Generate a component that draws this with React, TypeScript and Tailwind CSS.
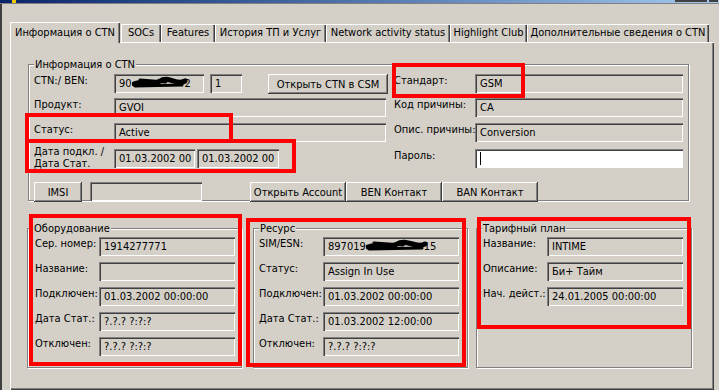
import React from "react";

const sunken =
  "shadow-[inset_1px_1px_0_#808080,inset_2px_2px_0_#404040,inset_-1px_-1px_0_#ffffff]";
const raised =
  "shadow-[inset_-1px_-1px_0_#404040,inset_1px_1px_0_#ffffff,inset_-2px_-2px_0_#808080]";

function Field({ w, white, children }: { w: string; white?: boolean; children?: React.ReactNode }) {
  return (
    <div
      className={`${w} h-[19px] shrink-0 ${white ? "bg-white" : "bg-[#d4d0c8]"} ${sunken} pl-[5px] pt-[3px] leading-[13px] whitespace-nowrap overflow-hidden flex items-start`}
    >
      {children}
    </div>
  );
}

function Button({ w, children }: { w: string; children: React.ReactNode }) {
  return (
    <div className={`${w} h-[20px] shrink-0 flex items-center justify-center leading-[13px] ${raised}`}>
      {children}
    </div>
  );
}

function Label({ w, children }: { w: string; children: React.ReactNode }) {
  return <div className={`${w} shrink-0 leading-[13px] whitespace-nowrap`}>{children}</div>;
}

function Group({ title, className, children }: { title: string; className: string; children?: React.ReactNode }) {
  return (
    <div className={`relative shrink-0 border border-[#808080] shadow-[1px_1px_0_#ffffff,inset_1px_1px_0_#ffffff] ${className}`}>
      <span className="absolute left-[5px] -top-[7px] bg-[#d4d0c8] px-px leading-[13px] whitespace-nowrap">{title}</span>
      {children}
    </div>
  );
}

function Scribble({ w }: { w: number }) {
  return (
    <svg width={w} height="13" viewBox={`0 0 ${w} 13`} className="shrink-0 -mt-px">
      <path
        d={`M2 8 C ${w * 0.2} 3, ${w * 0.35} 11, ${w * 0.5} 5 S ${w * 0.8} 10, ${w - 3} 5`}
        stroke="#000"
        strokeWidth="5"
        fill="none"
        strokeLinecap="round"
      />
      <path d={`M3 10 L ${w - 6} 9`} stroke="#000" strokeWidth="3" strokeLinecap="round" />
      <path d={`M8 4 L ${w * 0.6} 6`} stroke="#000" strokeWidth="3" strokeLinecap="round" />
    </svg>
  );
}

const tabs: { label: string; w: string }[] = [
  { label: "SOCs", w: "w-[40px]" },
  { label: "Features", w: "w-[54px]" },
  { label: "История ТП и Услуг", w: "w-[111px]" },
  { label: "Network activity status", w: "w-[124px]" },
  { label: "Highlight Club", w: "w-[77px]" },
  { label: "Дополнительные сведения о CTN", w: "w-[182px]" },
];

function Row({ label, children }: { label: string; children?: React.ReactNode }) {
  return (
    <div className="flex h-[19px]">
      <Label w="w-[64px]">{label}</Label>
      <Field w="w-[136px]">{children}</Field>
    </div>
  );
}

export default function App() {
  return (
    <div className="relative w-[719px] h-[390px] overflow-hidden bg-[#d4d0c8] text-[11px] text-black font-['DejaVu_Sans_Condensed','Liberation_Sans',sans-serif]">
      {/* title bar remains */}
      <div className="flex h-[3px] bg-linear-to-r from-[#0a246a] to-[#a6caf0]">
        <div className="ml-[12px] w-[4px] bg-[#f0c800]" />
        <div className="ml-auto w-[32px] h-[2px] bg-[#404040]" />
        <div className="ml-[2px] mr-[1px] w-[9px] h-[2px] bg-[#404040]" />
      </div>
      <div className="h-px bg-[#808080]" />

      <div className="flex">
        <div className="w-[2px] h-[386px] bg-[#404040]" />
        <div className="ml-[8px] flex flex-col">
          {/* tabs */}
          <div className="mt-[18px] flex items-end h-[20px]">
            <div className={`relative z-10 w-[110px] h-[21px] -mb-px pt-[4px] text-center leading-[13px] bg-[#d4d0c8] shadow-[inset_1px_1px_0_#ffffff,inset_-1px_0_0_#404040,inset_-2px_0_0_#808080]`}>
              Информация о CTN
            </div>
            <div className="w-px" />
            {tabs.map((t) => (
              <div
                key={t.label}
                className={`${t.w} h-[18px] pt-[2px] text-center leading-[13px] whitespace-nowrap shadow-[inset_1px_1px_0_#ffffff,inset_-1px_0_0_#404040,inset_-2px_0_0_#808080]`}
              >
                {t.label}
              </div>
            ))}
          </div>

          {/* panel */}
          <div className="w-[704px] h-[348px] pl-[18px] pt-[22px] shadow-[inset_1px_1px_0_#ffffff,inset_-1px_-1px_0_#404040,inset_-2px_-2px_0_#808080]">
            <Group title="Информация о CTN" className="w-[661px] h-[137px] pl-[5px] pt-[9px]">
              {/* row 1 */}
              <div className="flex">
                <div className="w-[360px] flex">
                  <Label w="w-[80px]">CTN:/ BEN:</Label>
                  <Field w="w-[90px]">
                    90
                    <Scribble w={56} />
                    <span className="-ml-[3px]">2</span>
                  </Field>
                  <div className="ml-[6px]">
                    <Field w="w-[32px]">1</Field>
                  </div>
                  <div className="ml-[26px]">
                    <Button w="w-[120px]">Открыть CTN в CSM</Button>
                  </div>
                </div>
                <Label w="w-[81px]">Стандарт:</Label>
                <Field w="w-[208px]">GSM</Field>
              </div>
              {/* row 2 */}
              <div className="flex mt-[4px]">
                <div className="w-[360px] flex">
                  <Label w="w-[80px]">Продукт:</Label>
                  <Field w="w-[272px]">GVOI</Field>
                </div>
                <Label w="w-[81px]">Код причины:</Label>
                <Field w="w-[208px]">CA</Field>
              </div>
              {/* row 3 */}
              <div className="flex mt-[6px]">
                <div className="w-[360px] flex">
                  <Label w="w-[80px]">Статус:</Label>
                  <Field w="w-[272px]">Active</Field>
                </div>
                <Label w="w-[81px]">Опис. причины:</Label>
                <Field w="w-[208px]">Conversion</Field>
              </div>
              {/* row 4 */}
              <div className="flex mt-[7px]">
                <div className="w-[360px] flex">
                  <div className="w-[80px] shrink-0 leading-[12px] -mt-[3px] whitespace-nowrap">
                    <div>Дата подкл. /</div>
                    <div>Дата Стат.</div>
                  </div>
                  <Field w="w-[81px]">01.03.2002 00</Field>
                  <div className="ml-[2px]">
                    <Field w="w-[82px]">01.03.2002 00</Field>
                  </div>
                </div>
                <Label w="w-[81px]">Пароль:</Label>
                <Field w="w-[208px]" white>
                  <div className="w-px h-[13px] bg-black" />
                </Field>
              </div>
              {/* row 5 */}
              <div className="flex mt-[12px]">
                <Button w="w-[48px]">IMSI</Button>
                <div className="ml-[8px]">
                  <Field w="w-[112px]" />
                </div>
                <div className="ml-[48px] flex">
                  <Button w="w-[96px]">Открыть Account</Button>
                  <Button w="w-[96px]">BEN Контакт</Button>
                  <Button w="w-[96px]">BAN Контакт</Button>
                </div>
              </div>
            </Group>

            {/* lower groups */}
            <div className="flex mt-[27px] -ml-px">
              <Group title="Оборудование" className="w-[215px] h-[140px] pl-[7px] pt-[8px]">
                <div className="flex flex-col gap-[6px]">
                  <Row label="Сер. номер:">1914277771</Row>
                  <Row label="Название:" />
                  <Row label="Подключен:">01.03.2002 00:00:00</Row>
                  <Row label="Дата Стат.:">?.?.? ?:?:?</Row>
                  <Row label="Отключен:">?.?.? ?:?:?</Row>
                </div>
              </Group>
              <Group title="Ресурс" className="ml-[11px] w-[215px] h-[140px] pl-[5px] pt-[8px]">
                <div className="flex flex-col gap-[6px]">
                  <Row label="SIM/ESN:">
                    897019
                    <Scribble w={62} />
                    <span className="-ml-[4px]">15</span>
                  </Row>
                  <Row label="Статус:">Assign In Use</Row>
                  <Row label="Подключен:">01.03.2002 00:00:00</Row>
                  <Row label="Дата Стат.:">01.03.2002 12:00:00</Row>
                  <Row label="Отключен:">?.?.? ?:?:?</Row>
                </div>
              </Group>
              <Group title="Тарифный план" className="ml-[8px] w-[216px] h-[140px] pl-[6px] pt-[8px]">
                <div className="flex flex-col gap-[6px]">
                  <Row label="Название:">INTIME</Row>
                  <Row label="Описание:">Би+ Тайм</Row>
                  <Row label="Нач. дейст.:">24.01.2005 00:00:00</Row>
                </div>
              </Group>
            </div>
          </div>
        </div>
      </div>

      {/* red annotation frames */}
      <div className="absolute left-[392px] top-[63px] w-[133px] h-[35px] border-4 border-[#ff0000]" />
      <div className="absolute left-[25px] top-[113px] w-[208px] h-[30px] border-4 border-[#ff0000]" />
      <div className="absolute left-[25px] top-[139px] w-[271px] h-[34px] border-4 border-[#ff0000]" />
      <div className="absolute left-[29px] top-[214px] w-[213px] h-[152px] border-4 border-[#ff0000]" />
      <div className="absolute left-[246px] top-[218px] w-[220px] h-[149px] border-4 border-[#ff0000]" />
      <div className="absolute left-[477px] top-[217px] w-[214px] h-[112px] border-4 border-[#ff0000]" />
    </div>
  );
}
